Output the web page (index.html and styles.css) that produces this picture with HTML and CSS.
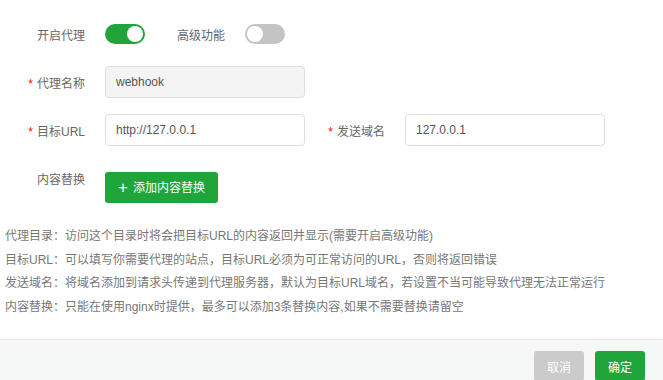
FILE: index.html
```html
<!DOCTYPE html>
<html lang="zh-CN">
<head>
  <meta charset="UTF-8">
  <title>代理设置</title>
  <link rel="stylesheet" href="styles.css">
</head>
<body>

  <div class="proxy-form">
    <div class="form-row">
      <label class="form-label">开启代理</label>
      <span class="switch on"><span class="knob"></span></span>
      <label class="form-label">高级功能</label>
      <span class="switch"><span class="knob"></span></span>
    </div>

    <div class="form-row">
      <label class="form-label required">代理名称</label>
      <input type="text" class="form-input" value="webhook" disabled>
    </div>

    <div class="form-row">
      <label class="form-label required">目标URL</label>
      <input type="text" class="form-input" value="http://127.0.0.1">
      <label class="form-label required">发送域名</label>
      <input type="text" class="form-input" value="127.0.0.1">
    </div>

    <div class="form-row top">
      <label class="form-label">内容替换</label>
      <button type="button" class="add-btn"><span class="plus">+</span>添加内容替换</button>
    </div>

    <ul class="help-list">
      <li>代理目录：访问这个目录时将会把目标URL的内容返回并显示(需要开启高级功能)</li>
      <li>目标URL：可以填写你需要代理的站点，目标URL必须为可正常访问的URL，否则将返回错误</li>
      <li>发送域名：将域名添加到请求头传递到代理服务器，默认为目标URL域名，若设置不当可能导致代理无法正常运行</li>
      <li>内容替换：只能在使用nginx时提供，最多可以添加3条替换内容,如果不需要替换请留空</li>
    </ul>
  </div>

  <div class="footer">
    <button type="button" class="btn btn-cancel">取消</button>
    <button type="button" class="btn btn-ok">确定</button>
  </div>

</body>
</html>
```

FILE: styles.css
```css
* {
  margin: 0;
  padding: 0;
  box-sizing: border-box;
}

body {
  font-family: "Liberation Sans", "Noto Sans CJK SC", sans-serif;
  font-size: 12px;
  color: #555;
  background: #fff;
  overflow: hidden;
}

.proxy-form {
  padding: 18px 0 0 5px;
}

.form-row {
  display: flex;
  align-items: center;
  height: 32px;
  margin-bottom: 16px;
}

.form-row.top {
  align-items: flex-start;
  margin-top: 26px;
  margin-bottom: 0;
}

.form-row.top .form-label {
  line-height: 16px;
}

.form-label {
  width: 100px;
  padding-right: 20px;
  text-align: right;
  color: #666;
  flex-shrink: 0;
}

.form-label.required::before {
  content: "*";
  color: #ef0808;
  margin-right: 4px;
}

.switch {
  position: relative;
  width: 40px;
  height: 20px;
  border-radius: 10px;
  background: #c4c4c4;
  flex-shrink: 0;
}

.switch .knob {
  position: absolute;
  top: 2px;
  left: 2px;
  width: 16px;
  height: 16px;
  border-radius: 50%;
  background: #fff;
}

.switch.on {
  background: #20a53a;
}

.switch.on .knob {
  left: 22px;
}

.form-input {
  width: 200px;
  height: 32px;
  padding: 0 10px;
  border: 1px solid #dcdfe6;
  border-radius: 4px;
  font-family: inherit;
  font-size: 12px;
  color: #555;
  background: #fff;
  outline: none;
}

.form-input:disabled {
  background: #f4f4f4;
  color: #555;
}

.add-btn {
  height: 31px;
  padding: 0 13px;
  border: none;
  border-radius: 3px;
  background: #20a53a;
  color: #fff;
  font-family: inherit;
  font-size: 12px;
  cursor: pointer;
}

.add-btn .plus {
  font-size: 17px;
  font-weight: 300;
  margin-right: 5px;
  vertical-align: -1px;
}

.help-list {
  list-style: none;
  margin-top: 21px;
  color: #777;
  line-height: 23.5px;
}

.footer {
  display: flex;
  justify-content: flex-end;
  gap: 11px;
  margin-top: 20px;
  padding: 11px 18px 12px;
  border-top: 1px solid #e8e8e8;
  background: #f6f7f7;
}

.btn {
  width: 50px;
  height: 30px;
  border: none;
  border-radius: 3px;
  color: #fff;
  font-family: inherit;
  font-size: 12px;
  cursor: pointer;
}

.btn-cancel {
  background: #cbcbcb;
}

.btn-ok {
  background: #20a53a;
}
```
